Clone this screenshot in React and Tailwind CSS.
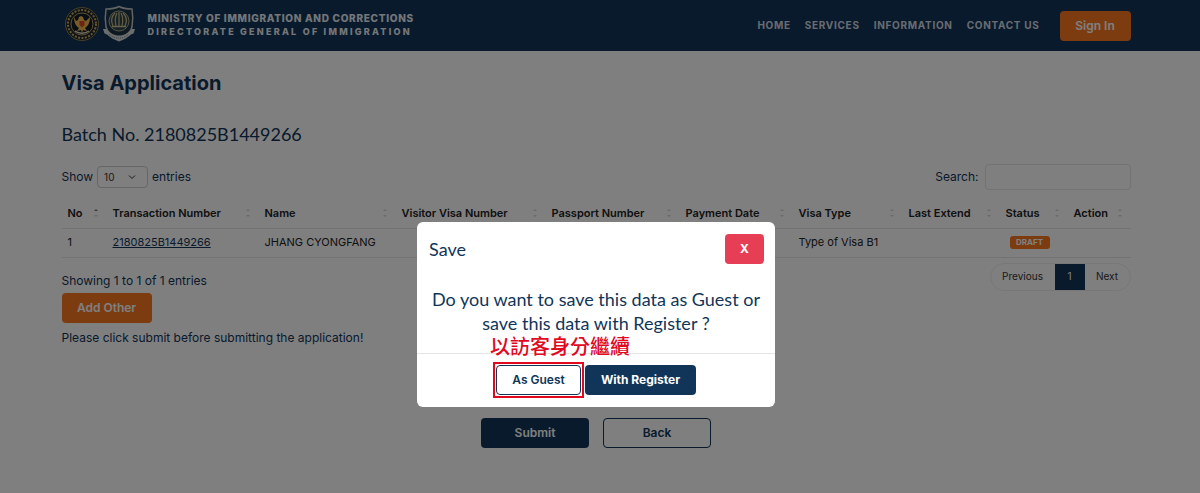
import React, { useState } from "react";

const columns = [
  { label: "No", width: "w-[45px]" },
  { label: "Transaction Number", width: "w-[152px]" },
  { label: "Name", width: "w-[137px]" },
  { label: "Visitor Visa Number", width: "w-[150px]" },
  { label: "Passport Number", width: "w-[134px]" },
  { label: "Payment Date", width: "w-[113px]" },
  { label: "Visa Type", width: "w-[110px]" },
  { label: "Last Extend", width: "w-[97px]" },
  { label: "Status", width: "w-[68px]" },
  { label: "Action", width: "w-[63px]" },
];

const applications = [
  {
    no: 1,
    transaction: "2180825B1449266",
    name: "JHANG CYONGFANG",
    visaType: "Type of Visa B1",
    status: "DRAFT",
  },
];

const navItems = ["HOME", "SERVICES", "INFORMATION", "CONTACT US"];

const MinistrySeal = () => (
  <svg viewBox="0 0 36 36" className="size-9" aria-hidden="true">
    <circle cx="18" cy="18" r="16.5" fill="#20262c" stroke="#8f8051" strokeWidth="1" />
    <circle cx="18" cy="18" r="14" fill="none" stroke="#c9ad62" strokeWidth="2" strokeDasharray="2 1.4" />
    <circle cx="18" cy="18" r="11" fill="#111c28" stroke="#b5a06a" strokeWidth="1" />
    <path
      d="M10 11c0 6 2 9 5 11l-2 3 4-1 1 3 1-3 4 1-2-3c3-2 5-5 5-11l-4 4-2-1-1-3-2-1-2 1-1 3-2 1z"
      fill="#f2b84c"
    />
    <path d="M15.5 15h5v4l-2.500 2.500-2.500-2.500z" fill="#d94b2b" />
    <path d="M11 25c4 3 10 3 14 0" stroke="#e9dfc4" strokeWidth="1.500" fill="none" />
  </svg>
);

const ImmigrationShield = () => (
  <svg viewBox="0 0 34 38" className="h-[38px] w-[34px]" aria-hidden="true">
    <path
      d="M17 1.500c4 2 8 2.500 13 2.500 1 6 1 12 0 18-1 5-6 9-13 12-7-3-12-7-13-12-1-6-1-12 0-18 5 0 9-.5 13-2.500z"
      fill="#1d3446"
      stroke="#c4c8c8"
      strokeWidth="1.500"
    />
    <circle cx="17" cy="16" r="10" fill="#2f444c" stroke="#aaa887" strokeWidth="1" />
    <path
      d="M17 7v15M13 8c-4 4-4 9-2 13M21 8c4 4 4 9 2 13M15 8c-2 4-2 9-1 13M19 8c2 4 2 9 1 13"
      stroke="#c9bb86"
      strokeWidth="1.200"
      fill="none"
    />
    <path d="M10 21.500h14" stroke="#d0c293" strokeWidth="1.500" />
    <path
      d="M1 24l3.500 0c3 4 7 6.500 12.500 6.500s9.500-2.500 12.500-6.500l3.500 0-1.500 4.500-2.500 1c-3 3-7 5-12 7-5-2-9-4-12-7l-2.500-1z"
      fill="#d8dada"
    />
    <path d="M7 29c6 5.500 14 5.500 20 0" stroke="#75808a" strokeWidth="1" strokeDasharray="1 1" fill="none" />
  </svg>
);

const SortIcon = ({ active }) => (
  <svg viewBox="0 0 6 10" className="h-2.5 w-1.5 shrink-0" aria-hidden="true">
    <path d="M1 3 3 1l2 2z" fill={active ? "#777777" : "#d4d4d4"} />
    <path d="M1 7 3 9l2-2z" fill="#d4d4d4" />
  </svg>
);

const Header = () => (
  <header className="bg-[#113559] pr-2">
    <div className="mx-auto flex h-[51px] max-w-[1069px] items-center">
      <a href="#home" className="flex items-center gap-3">
        <span className="flex items-center gap-0.5 pb-1 pl-0.5">
          <MinistrySeal />
          <ImmigrationShield />
        </span>
        <span className="pb-0.5 font-extrabold text-[#e8edf2]">
          <span className="block text-[10px] leading-[14px] tracking-[0.07em]">
            MINISTRY OF IMMIGRATION AND CORRECTIONS
          </span>
          <span className="block text-[9px] leading-[14px] tracking-[0.25em]">
            DIRECTORATE GENERAL OF IMMIGRATION
          </span>
        </span>
      </a>
      <nav className="ml-auto flex items-center gap-3.5 text-[10px] font-bold tracking-[0.07em] text-[#d3d9e0]">
        {navItems.map((item) => (
          <a key={item} href="#menu">
            {item}
          </a>
        ))}
      </nav>
      <button className="ml-5 h-[30px] w-[71px] rounded bg-[#f97820] text-[12px] font-semibold text-white">
        Sign In
      </button>
    </div>
  </header>
);

const ApplicationTable = () => (
  <table className="mt-[9px] w-full table-fixed border-collapse text-left text-[11px] text-[#222222]">
    <thead>
      <tr className="h-[29px] border-b border-[#e4e4e4]">
        {columns.map((column, index) => (
          <th key={column.label} className={`${column.width} pr-2 pl-1.5 font-semibold`}>
            <span className="flex items-center justify-between whitespace-nowrap">
              {column.label}
              <SortIcon active={index === 0} />
            </span>
          </th>
        ))}
      </tr>
    </thead>
    <tbody>
      {applications.map((row) => (
        <tr key={row.transaction} className="h-[29px] border-b border-[#e4e4e4]">
          <td className="pl-1.5">{row.no}</td>
          <td className="pl-1.5">
            <a href="#detail" className="text-[#113559] underline">
              {row.transaction}
            </a>
          </td>
          <td className="pl-1.5 whitespace-nowrap">{row.name}</td>
          <td />
          <td />
          <td />
          <td className="pl-1.5">{row.visaType}</td>
          <td />
          <td className="pl-2.5">
            <span className="block h-[13px] w-10 rounded-[3px] bg-[#f97820] text-center text-[8px] leading-[13px] font-bold text-white">
              {row.status}
            </span>
          </td>
          <td />
        </tr>
      ))}
    </tbody>
  </table>
);

const SaveDialog = ({ onClose }) => (
  <div className="fixed inset-0 flex items-start justify-center bg-black/50 pt-[222px] pr-2">
    <div
      role="dialog"
      aria-modal="true"
      aria-labelledby="save-title"
      className="w-[358px] rounded-md bg-white"
    >
      <div className="flex items-center justify-between p-3 pr-[11px]">
        <h5 id="save-title" className="font-['Lato',sans-serif] text-[18px] leading-6">
          Save
        </h5>
        <button
          onClick={onClose}
          className="h-[30px] w-[39px] rounded bg-[#e63f55] text-[12px] font-bold text-white"
        >
          X
        </button>
      </div>
      <p className="px-3 pt-[11px] pb-[18px] text-center font-['Lato',sans-serif] text-[18px] leading-6">
        Do you want to save this data as Guest or save this data with Register ?
      </p>
      <div className="relative flex justify-center gap-1 border-t border-[#e5e5e5] px-3 pt-[11px] pb-3">
        <span className="absolute -top-[18px] left-[73px] font-['Noto_Sans_CJK_TC',sans-serif] text-[20px] leading-5 font-medium whitespace-nowrap text-[#e0091f]">
          以訪客身分繼續
        </span>
        <div className="relative">
          <button className="h-[30px] w-[85px] rounded border border-[#113559] bg-white text-[12px] font-semibold">
            As Guest
          </button>
          <span className="pointer-events-none absolute -inset-[3px] border-2 border-[#e0091f]" />
        </div>
        <button className="h-[30px] w-[111px] rounded bg-[#113559] text-[12px] font-bold text-white">
          With Register
        </button>
      </div>
    </div>
  </div>
);

const App = () => {
  const [showDialog, setShowDialog] = useState(true);
  const [search, setSearch] = useState("");

  return (
    <div className="min-h-screen bg-white font-['Inter',sans-serif] text-[12px] text-[#113559]">
      <Header />

      <main className="pr-2">
        <div className="mx-auto max-w-[1069px]">
          <h1 className="pt-[18px] text-[20px] leading-7 font-bold">Visa Application</h1>
          <h2 className="mt-[23px] font-['Lato',sans-serif] text-[18px] leading-7">
            Batch No. 2180825B1449266
          </h2>

          {/* Table controls */}
          <div className="mt-4 flex items-center justify-between">
            <label className="flex items-center gap-1">
              Show
              <span className="relative flex items-center">
                <select
                  defaultValue="10"
                  className="h-[22px] w-[51px] appearance-none rounded-sm border border-[#c8ccd0] bg-white pl-1.5 text-[10px] text-[#333333]"
                >
                  <option>10</option>
                  <option>25</option>
                  <option>50</option>
                </select>
                <svg viewBox="0 0 8 6" className="pointer-events-none absolute right-3 h-1.5 w-2" aria-hidden="true">
                  <path d="m1 1.500 3 3 3-3" fill="none" stroke="#333333" />
                </svg>
              </span>
              entries
            </label>
            <label className="flex items-center gap-1.5">
              Search:
              <input
                type="search"
                value={search}
                onChange={(e) => setSearch(e.target.value)}
                className="h-[26px] w-[146px] rounded border border-[#e4e4e4] bg-white px-2"
              />
            </label>
          </div>

          <ApplicationTable />

          <div className="flex justify-between pt-[5px]">
            <div>
              <p className="pt-2 leading-5">Showing 1 to 1 of 1 entries</p>
              <button className="mt-0.5 block h-[30px] w-[90px] rounded bg-[#f97820] font-semibold text-white">
                Add Other
              </button>
            </div>
            <div className="flex h-7 overflow-hidden rounded-full border border-[#eeeeee] text-[10px] text-[#333333]">
              <button className="w-16">Previous</button>
              <button className="w-[30px] bg-[#113559] text-white">1</button>
              <button className="w-[45px]">Next</button>
            </div>
          </div>
          <p className="mt-1.5 leading-[18px]">
            Please click submit before submitting the application!
          </p>

          <div className="mt-[71px] flex justify-center gap-3.5 font-semibold">
            <button className="h-[30px] w-[108px] rounded bg-[#113559] text-white">Submit</button>
            <button className="h-[30px] w-[108px] rounded border border-[#113559]">Back</button>
          </div>
        </div>
      </main>

      {showDialog && <SaveDialog onClose={() => setShowDialog(false)} />}
    </div>
  );
};

export default App;
